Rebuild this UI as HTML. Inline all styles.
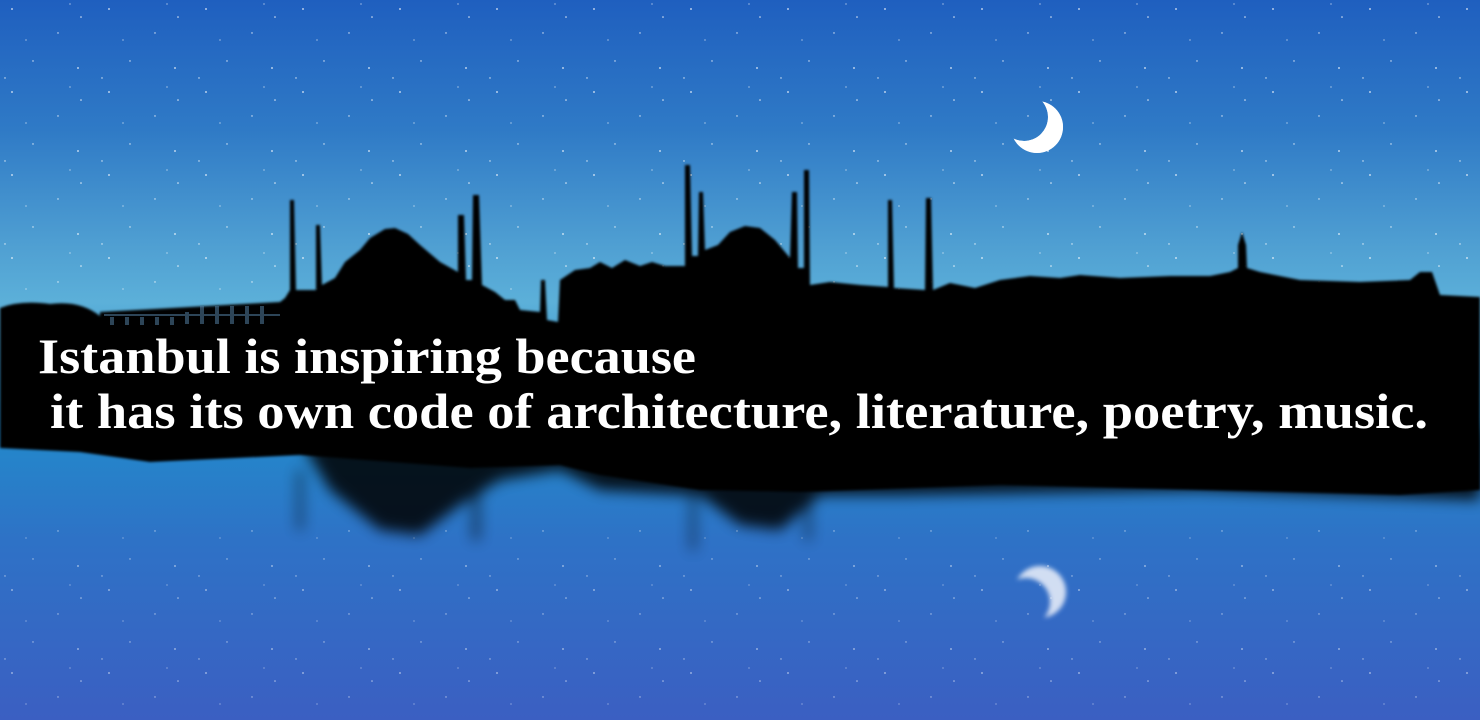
<!DOCTYPE html>
<html><head><meta charset="utf-8"><style>
html,body{margin:0;padding:0;width:1480px;height:720px;overflow:hidden;background:#000}
svg{display:block}
</style></head><body>
<svg width="1480" height="720" viewBox="0 0 1480 720" xmlns="http://www.w3.org/2000/svg">
<defs>
<linearGradient id="sky" x1="0" y1="0" x2="0" y2="1">
<stop offset="0" stop-color="#1f5fbf"/>
<stop offset="0.18" stop-color="#2f7ac6"/>
<stop offset="0.34" stop-color="#4f9fd2"/>
<stop offset="0.42" stop-color="#5cb0d9"/>
<stop offset="0.6" stop-color="#2389cb"/>
<stop offset="0.75" stop-color="#2e72c6"/>
<stop offset="1" stop-color="#3b5fc2"/>
</linearGradient>
<pattern id="stars" width="97" height="83" patternUnits="userSpaceOnUse">
<circle cx="12" cy="9" r="0.9" fill="#fff"/><circle cx="58" cy="33" r="0.7" fill="#fff"/>
<circle cx="81" cy="17" r="0.8" fill="#fff"/><circle cx="33" cy="61" r="0.7" fill="#fff"/>
<circle cx="78" cy="68" r="0.9" fill="#fff"/><circle cx="26" cy="40" r="0.6" fill="#fff"/>
<circle cx="70" cy="4" r="0.6" fill="#fff"/><circle cx="5" cy="78" r="0.7" fill="#fff"/>
</pattern>
<mask id="moonm"><rect width="1480" height="720" fill="#000"/><circle cx="1037" cy="127" r="26" fill="#fff"/><circle cx="1024" cy="117" r="24" fill="#000"/></mask>
<mask id="moonr"><rect width="1480" height="720" fill="#000"/><circle cx="1040" cy="592" r="26" fill="#fff"/><circle cx="1026" cy="602" r="24" fill="#000"/></mask>
<filter id="b1"><feGaussianBlur stdDeviation="1.2"/></filter>
<filter id="b6"><feGaussianBlur stdDeviation="7"/></filter>
<filter id="b3"><feGaussianBlur stdDeviation="2.5"/></filter>
<filter id="glow"><feGaussianBlur stdDeviation="4"/></filter>
</defs>
<rect width="1480" height="720" fill="url(#sky)"/>
<rect width="1480" height="300" fill="url(#stars)" opacity="0.85"/>
<rect y="520" width="1480" height="200" fill="url(#stars)" opacity="0.6"/>

<!-- moon -->
<g>
<rect width="1480" height="720" fill="#fff" mask="url(#moonm)" filter="url(#glow)" opacity="0.8"/>
<rect width="1480" height="720" fill="#fff" mask="url(#moonm)"/>
</g>
<g filter="url(#b3)" opacity="0.85">
<rect width="1480" height="720" fill="#eef2fb" mask="url(#moonr)"/>
</g>

<!-- reflection blobs -->
<g filter="url(#b6)" fill="#000" opacity="0.85">
<path d="M0 430 L300 440 L330 490 L380 530 L420 535 L460 505 L500 480 L560 470 L600 490 L700 495 L740 525 L780 530 L820 495 L900 495 L1200 490 L1480 500 L1480 430 Z"/>
<rect x="297" y="470" width="6" height="60" opacity="0.6"/><rect x="472" y="470" width="8" height="70" opacity="0.6"/>
<rect x="690" y="480" width="6" height="70" opacity="0.6"/><rect x="805" y="480" width="6" height="60" opacity="0.6"/>
</g>

<!-- main silhouette -->
<g filter="url(#b1)" fill="#000">
<path d="M0 308 Q20 300 50 304 Q80 300 100 316 L100 312 L280 302 L285 298 L290 290 L290 200 L294 200 L296 290 L316 290 L316 225 L320 225 L322 285 L335 278 L345 262 L360 250 L370 238 L385 229 L395 228 L408 234 L420 245 L440 262 L458 272 L458 215 L464 215 L466 280 L472 280 L473 195 L479 195 L482 285 L495 292 L505 300 L515 300 L520 310 L540 312 L541 280 L545 280 L547 320 L558 322 L560 280 L575 270 L590 268 L600 262 L612 268 L625 260 L640 266 L652 262 L665 266 L685 266 L685 165 L690 165 L692 256 L698 256 L699 192 L703 192 L705 250 L718 245 L730 232 L745 226 L760 228 L775 240 L790 258 L792 192 L797 192 L798 268 L804 268 L804 170 L809 170 L810 285 L830 282 L860 285 L888 287 L888 200 L892 200 L894 288 L925 290 L926 198 L931 198 L933 290 L950 283 L975 288 L1000 280 L1030 276 L1060 278 L1080 275 L1120 278 L1170 276 L1210 276 L1230 272 L1238 268 L1238 245 L1242 232 L1246 245 L1247 268 L1260 272 L1300 280 L1360 282 L1410 280 L1420 272 L1432 272 L1440 295 L1480 297 L1480 490 L1400 495 L1200 490 L1000 485 L800 492 L700 490 L600 475 L560 465 L470 468 L300 455 L150 462 L80 452 L0 448 Z"/>
</g>
<g fill="#5a8ab0" opacity="0.5">
<rect x="104" y="314" width="176" height="2"/>
<rect x="110" y="317" width="4" height="8"/><rect x="125" y="317" width="4" height="8"/><rect x="140" y="317" width="4" height="8"/><rect x="155" y="317" width="4" height="8"/><rect x="170" y="317" width="4" height="8"/><rect x="185" y="312" width="4" height="12"/><rect x="200" y="306" width="4" height="18"/><rect x="215" y="306" width="4" height="18"/><rect x="230" y="306" width="4" height="18"/><rect x="245" y="306" width="4" height="18"/><rect x="260" y="306" width="4" height="18"/>
</g>

<text font-family="'Liberation Serif', 'DejaVu Serif', serif" font-weight="bold" font-size="50" fill="#fff">
<tspan x="38" y="373" textLength="658" lengthAdjust="spacingAndGlyphs">Istanbul is inspiring because</tspan>
<tspan x="50" y="428" textLength="1378" lengthAdjust="spacingAndGlyphs">it has its own code of architecture, literature, poetry, music.</tspan>
</text>
</svg>
</body></html>
